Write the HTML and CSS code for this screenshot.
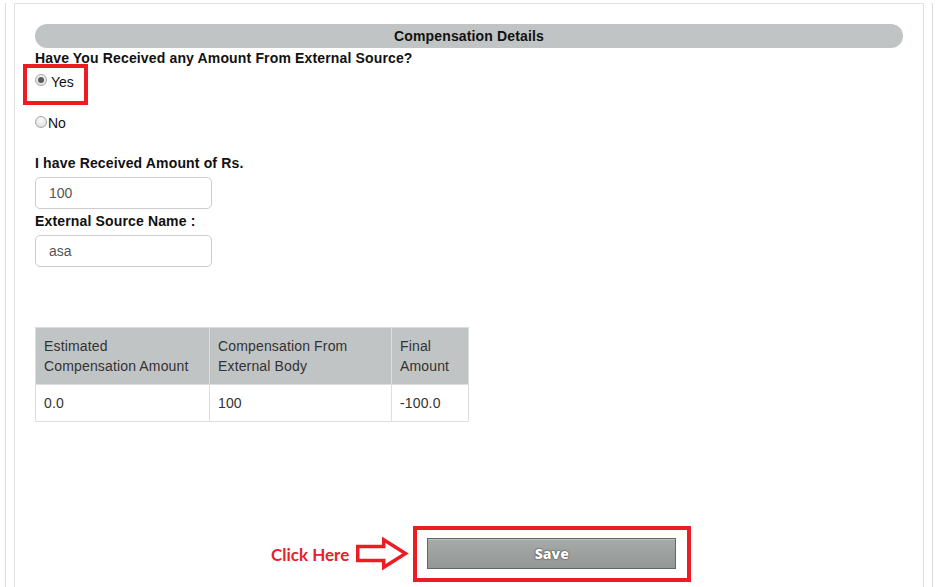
FILE: index.html
```html
<!DOCTYPE html>
<html>
<head>
<meta charset="utf-8">
<link rel="stylesheet" href="styles.css">
</head>
<body>
<div class="outer">
  <div class="panel">
    <div class="section-title">Compensation Details</div>
    <div class="q-label">Have You Received any Amount From External Source?</div>
    <div class="radio-row highlight"><span class="radio checked"></span><span class="opt yes">Yes</span></div>
    <div class="radio-row no-row"><span class="radio"></span><span class="opt no">No</span></div>
    <div class="field-label amt">I have Received Amount of Rs.</div>
    <div class="input">100</div>
    <div class="field-label src">External Source Name :</div>
    <div class="input">asa</div>
    <table class="comp">
      <colgroup><col class="c1"><col class="c2"><col class="c3"></colgroup>
      <thead>
        <tr><th>Estimated Compensation Amount</th><th>Compensation From External Body</th><th>Final Amount</th></tr>
      </thead>
      <tbody>
        <tr><td>0.0</td><td>100</td><td>-100.0</td></tr>
      </tbody>
    </table>
    <div class="action-row">
      <span class="click">Click Here</span>
      <svg class="arrow" width="54" height="34" viewBox="0 0 54 34"><path d="M2.75 9.5 H28.75 V2.75 L50.5 16.5 L28.75 30.25 V23.5 H2.75 Z" fill="#fff" stroke="#ed1c24" stroke-width="3.5" stroke-linejoin="miter"/></svg>
      <div class="save-box"><button class="save">Save</button></div>
    </div>
  </div>
</div>
</body>
</html>
```
FILE: styles.css
```css
html, body {
  margin: 0;
  padding: 0;
  background: #fff;
}
body {
  font-family: "Liberation Sans", Arial, sans-serif;
  color: #111;
  overflow: hidden;
}
.outer {
  margin-left: 5px;
  width: 918px;
  height: 587px;
  border-left: 1px solid #dcdcdc;
  border-right: 1px solid #dcdcdc;
  padding-left: 8px;
  box-sizing: content-box;
}
.panel {
  margin-top: 3px;
  width: 910px;
  height: 600px;
  border: 1px solid #e0e0e0;
  border-bottom: none;
  padding: 20px 20px 0 20px;
  box-sizing: border-box;
}
.section-title {
  height: 24px;
  line-height: 24px;
  background: #c1c4c4;
  border-radius: 12px;
  text-align: center;
  font-weight: bold;
  font-size: 14px;
  letter-spacing: 0.15px;
  color: #111;
}
.q-label {
  margin-top: 3px;
  font-weight: bold;
  font-size: 14px;
  letter-spacing: 0.15px;
  line-height: 15px;
}
.radio-row {
  display: flex;
  align-items: flex-start;
  font-size: 14px;
  line-height: 20px;
  color: #111;
}
.highlight {
  display: inline-flex;
  margin-left: -12px;
  margin-top: -2px;
  border: 4px solid #ed1c24;
  padding: 4px 10px 9px 8px;
}
.radio {
  width: 12px;
  height: 12px;
  box-sizing: border-box;
  border-radius: 50%;
  border: 1px solid #a8a8a8;
  background: radial-gradient(circle at 50% 35%, #fbfbfb 0%, #e6e6e6 60%, #d2d2d2 100%);
  margin-top: 2px;
  position: relative;
  flex: none;
}
.radio.checked::after {
  content: "";
  position: absolute;
  left: 2px;
  top: 2px;
  width: 6px;
  height: 6px;
  border-radius: 50%;
  background: #5a5a5a;
}
.opt.yes { margin-left: 4px; }
.opt.no { margin-left: 1px; }
.no-row {
  margin-top: 8px;
}
.no-row .radio { margin-top: 3px; }
.field-label {
  font-weight: bold;
  font-size: 14px;
  letter-spacing: 0.15px;
  line-height: 18px;
}
.field-label.amt { margin-top: 21px; }
.field-label.src { margin-top: 3px; }
.input {
  margin-top: 5px;
  width: 177px;
  height: 32px;
  box-sizing: border-box;
  border: 1px solid #ccc;
  border-radius: 5px;
  padding-left: 13px;
  font-size: 14px;
  line-height: 30px;
  color: #555;
}
.comp {
  margin-top: 60px;
  border-collapse: collapse;
  table-layout: fixed;
  width: 433px;
  font-size: 14px;
  letter-spacing: 0.15px;
  line-height: 20px;
  color: #333;
}
.comp col.c1 { width: 174px; }
.comp col.c2 { width: 182px; }
.comp col.c3 { width: 77px; }
.comp th, .comp td {
  border: 1px solid #dedede;
  padding: 8px;
  text-align: left;
  vertical-align: top;
  font-weight: normal;
}
.comp th {
  background: #c1c4c4;
  color: #333;
}
.action-row {
  margin-top: 104px;
  display: flex;
  align-items: center;
  padding-left: 236px;
}
.click {
  font-family: Lato, "Liberation Sans", sans-serif;
  font-weight: bold;
  font-size: 17px;
  color: #e5222a;
}
.arrow {
  display: block;
  margin-left: 6px;
  flex: none;
}
.save-box {
  margin-left: 4px;
  border: 4px solid #ed1c24;
  padding: 8px 11px 9px 10px;
  display: flex;
}
.save {
  width: 249px;
  height: 31px;
  box-sizing: border-box;
  border: 1px solid #5b6a64;
  background: linear-gradient(#a6aaa8, #939795);
  box-shadow: inset 0 1px 0 #bcc4bf;
  color: #fff;
  font-family: "Open Sans", "Liberation Sans", sans-serif;
  font-weight: 800;
  font-size: 14px;
  text-shadow: 0 0 2px #3a3f3d, 0 0 1px #3a3f3d;
  padding: 0;
  margin: 0;
}
```
